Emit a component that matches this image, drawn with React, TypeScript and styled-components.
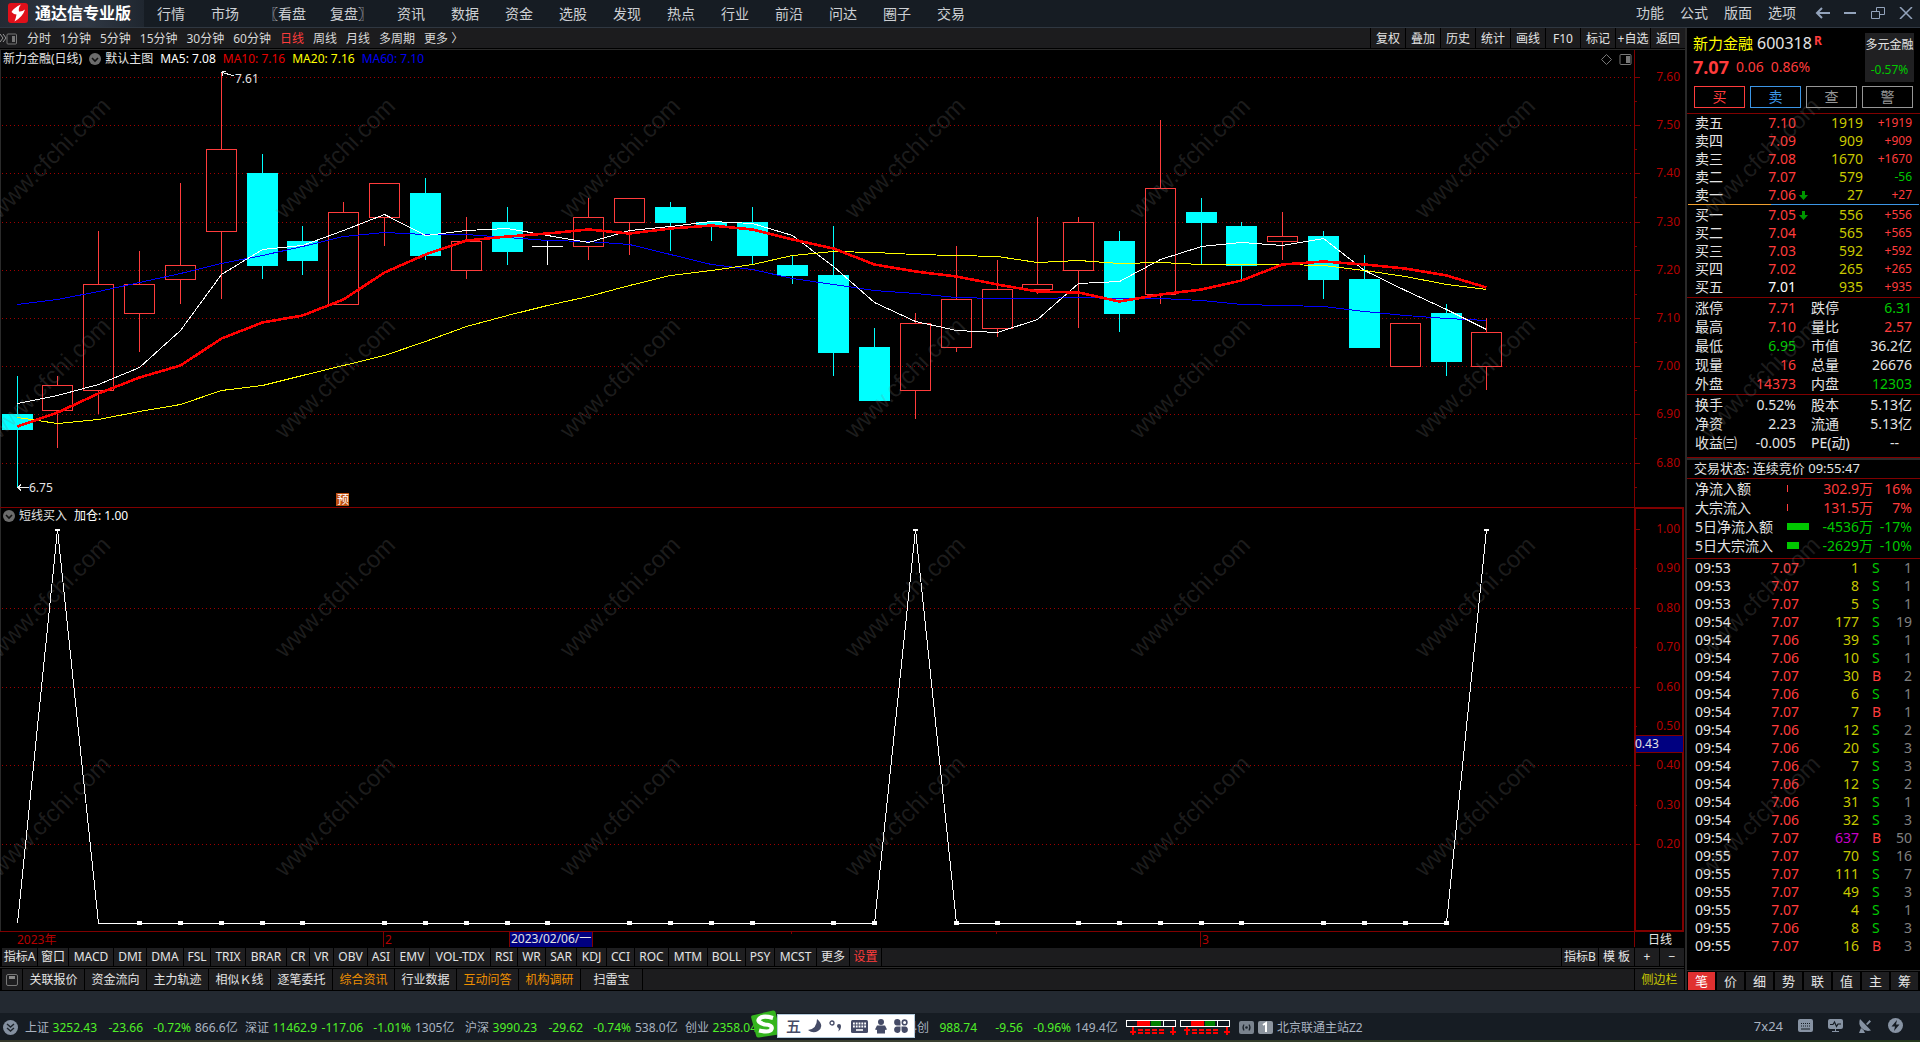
import React, { useLayoutEffect, useRef, useState } from "react";
import styled, { createGlobalStyle } from "styled-components";

const RED = "#ff3c3c";
const GREEN = "#00c800";
const YELLOW = "#c8c800";
const WHITE = "#e4e4e4";
const LINE = "#800000";
const AXIS = "#b40000";

const GlobalStyle = createGlobalStyle`
  * { box-sizing: border-box; }
  body {
    margin: 0;
    background: #000;
    color: ${WHITE};
    font: 12px/16px "Noto Sans", "Noto Sans CJK SC", sans-serif;
  }
  button {
    margin: 0;
    padding: 0;
    border: 0;
    background: none;
    color: inherit;
    font: inherit;
    white-space: nowrap;
    cursor: pointer;
  }
  svg { display: block; flex: none; }
`;

/* ---------- frame ---------- */

const Shell = styled.div`
  position: relative;
  display: flex;
  flex-direction: column;
  height: 100vh;
  min-height: 1020px;
  overflow: hidden;
`;

const TitleBar = styled.header`
  display: flex;
  align-items: stretch;
  height: 28px;
  background: #161c23;
  border-bottom: 1px solid #2f3741;
  color: #cdd0d4;
  font-size: 14px;
`;

const Brand = styled.div`
  display: flex;
  align-items: center;
  gap: 7px;
  width: 144px;
  padding-left: 8px;
  padding-bottom: 2px;
  background: linear-gradient(90deg, #242a33, #303844 60%, #1f262f);
  color: #fff;
  font-size: 16px;
  font-weight: 700;
  line-height: 24px;
  white-space: nowrap;
`;

const Nav = styled.nav`
  display: flex;
  flex: 1;
`;

const NavItem = styled.button<{ $wide?: boolean }>`
  width: ${(p) => (p.$wide ? 66 : 54)}px;
`;

const WindowMenu = styled.div`
  display: flex;
  align-items: center;
  gap: 16px;
  padding-right: 7px;
  padding-bottom: 1px;
`;

const WindowButtons = styled.div`
  display: flex;
  gap: 14px;
  padding-left: 3px;
`;

const WindowButton = styled.button`
  display: grid;
  place-items: center;
  width: 14px;
  height: 24px;
  color: #93a3bb;
`;

const Body = styled.main`
  display: flex;
  flex: 1;
  min-height: 0;
  border-bottom: 1px solid #000;
`;

const Left = styled.div`
  display: flex;
  flex-direction: column;
  flex: 1;
  min-width: 0;
  padding-right: 1px;
`;

/* ---------- period bar ---------- */

const PeriodBar = styled.div`
  display: flex;
  height: 22px;
  margin-right: -1px;
  background: #1c1c1e;
  border-bottom: 1px solid #2a2a2a;
  box-shadow: inset 0 -1px 0 #000;
`;

const Periods = styled.div`
  display: flex;
  align-items: center;
  flex: 1;
  gap: 9px;
`;

const Period = styled.button<{ $active?: boolean }>`
  color: ${(p) => (p.$active ? RED : "#d8d8d8")};
`;

const Tool = styled.button`
  width: 35px;
  border-left: 1px solid #000;
  color: ${WHITE};
`;

/* ---------- charts ---------- */

const ChartPane = styled.section<{ $grow: number }>`
  position: relative;
  flex: ${(p) => p.$grow} 1 0;
  min-height: 0;
  overflow: hidden;

  text {
    font: 12px "Noto Sans", "Noto Sans CJK SC", sans-serif;
  }
`;

const DateStrip = styled.div`
  height: 17px;
  overflow: hidden;

  text {
    font: 12px "Noto Sans", "Noto Sans CJK SC", sans-serif;
  }
`;

const Legend = styled.div`
  position: absolute;
  top: 1px;
  left: 3px;
  display: flex;
  align-items: center;
  gap: 7px;
  height: 16px;
  white-space: nowrap;
`;

const LegendItem = styled.span<{ $color?: string }>`
  color: ${(p) => p.$color ?? "#fff"};
`;

const LegendName = styled.span`
  display: flex;
  align-items: center;
  gap: 4px;
`;

const PaneTools = styled.div`
  position: absolute;
  top: 3px;
  right: 52px;
  display: flex;
  gap: 6px;
`;

/* ---------- tab rows ---------- */

const IndicatorTabs = styled.div`
  display: flex;
  gap: 1px;
  height: 21px;
  padding-left: 2px;
  border-bottom: 1px solid #000;
  box-shadow: inset 0 -1px 0 #2a2a2a;
`;

const IndicatorTab = styled.button<{ $w: number; $color?: string }>`
  flex: none;
  width: ${(p) => p.$w}px;
  height: 18px;
  background: #1e1e20;
  color: ${(p) => p.$color ?? WHITE};
`;

const TabFill = styled.div`
  flex: 1;
  max-height: 21px;
  background: #1c1c1e;
`;

const IndicatorFill = styled(TabFill)`
  height: 18px;
`;

const BottomTabs = styled.div`
  display: flex;
  gap: 1px;
  height: 21px;
  padding-left: 2px;
`;

const BottomTab = styled.button<{ $w?: number; $color?: string }>`
  display: grid;
  place-items: center;
  flex: none;
  width: ${(p) => p.$w ?? 61}px;
  background: #1e1e20;
  color: ${(p) => p.$color ?? WHITE};
`;

/* ---------- quote panel ---------- */

const Side = styled.aside`
  display: flex;
  flex-direction: column;
  flex: none;
  width: 235px;
  border-left: 2px solid #2a2a2a;
`;

const QuoteHead = styled.div`
  display: flex;
  justify-content: space-between;
  height: 58px;
  padding: 3px 6px 0 6px;
`;

const QuoteLine = styled.div`
  display: flex;
  align-items: center;
  gap: 4px;
  height: 24px;
  font-size: 16px;
`;

const StockName = styled.span`
  color: #ffff00;
  font-size: 15px;
`;

const Flag = styled.b`
  align-self: flex-start;
  margin-left: -2px;
  color: ${RED};
  font-size: 12px;
  line-height: 20px;
`;

const PriceLine = styled(QuoteLine)`
  gap: 7px;
  color: ${RED};
  font-size: 14px;
`;

const LastPrice = styled.b`
  font-size: 18px;
`;

const Sector = styled.div`
  display: flex;
  flex-direction: column;
  justify-content: space-around;
  align-items: center;
  width: 49px;
  height: 49px;
  margin-top: 2px;
  background: #202022;
  white-space: nowrap;
`;

const SectorChange = styled.span`
  color: ${GREEN};
`;

const Trade = styled.div`
  display: flex;
  gap: 5px;
  padding: 0 7px 5px 7px;
`;

const TradeButton = styled.button<{ $color: string }>`
  flex: 1;
  height: 22px;
  border: 1px solid ${(p) => p.$color};
  color: ${(p) => p.$color};
  font-size: 14px;
  line-height: 18px;
`;

const Grid = styled.table<{ $row: number }>`
  width: 100%;
  table-layout: fixed;
  border-collapse: separate;
  border-spacing: 0;
  padding: 0 8px;
  font-size: 14px;

  td, th {
    height: ${(p) => p.$row}px;
    padding: 0;
    font-weight: 400;
    line-height: ${(p) => p.$row}px;
    text-align: right;
    white-space: nowrap;
  }
`;

const Block = styled.section<{ $h: number }>`
  flex: none;
  height: ${(p) => p.$h}px;
  border-top: 1px solid ${LINE};
  overflow: hidden;
`;

const Label = styled.th`
  && { text-align: left; }
`;

const SecondLabel = styled(Label)`
  && { padding-left: 15px; }
`;

const Num = styled.td<{ $color?: string; $small?: boolean; $inset?: boolean }>`
  color: ${(p) => p.$color ?? WHITE};
  font-size: ${(p) => (p.$small ? 12 : 14)}px;
  && { padding-right: ${(p) => (p.$inset ? 13 : 0)}px; }
`;

const IconCell = styled.td`
  svg { margin-left: 3px; }
`;

const TradeSide = styled.td<{ $color: string }>`
  && { padding-left: 13px; text-align: left; }
  color: ${(p) => p.$color};
`;

const Balance = styled.div`
  display: flex;
  height: 1px;
  margin: 0 1px 1px;
  background: #3c96e6;

  &::before {
    content: "";
    width: 36%;
    background: #f0a030;
  }
`;

const TradeState = styled.div`
  height: 20px;
  padding-left: 7px;
  border-top: 2px solid #2a2a2a;
  font-size: 13px;
  line-height: 16px;
`;

const FlowBar = styled.div<{ $w: number; $color: string }>`
  width: ${(p) => p.$w}px;
  height: 7px;
  background: ${(p) => p.$color};
`;

const SideTabs = styled.div`
  display: flex;
  gap: 2px;
  height: 20px;
  margin-top: auto;
  padding: 1px 2px 0 1px;
  border-top: 1px solid #2a2a2a;
`;

const SideTab = styled.button<{ $active?: boolean }>`
  flex: 1;
  background: ${(p) => (p.$active ? "#e03030" : "#1e1e20")};
  color: ${(p) => (p.$active ? "#fff" : WHITE)};
  font-size: 13px;
  line-height: 18px;
`;

/* ---------- status bar ---------- */

const Band = styled.div`
  flex: none;
  height: 22px;
  background: #232931;
`;

const StatusBar = styled.footer`
  position: relative;
  display: flex;
  align-items: center;
  flex: none;
  height: 27px;
  padding-top: 2px;
  padding-left: 3px;
  background: #161c23;
  color: #a9b3c0;
`;

const Quotes = styled.div`
  display: flex;
  padding-left: 7px;
`;

const Quote = styled.div`
  display: grid;
  grid-template-columns: 24px 48px 46px 48px 1fr;
  width: 220px;
  text-align: right;
  white-space: nowrap;
`;

const QuoteName = styled.span`
  text-align: left;
`;

const QuoteNum = styled.span`
  color: #50f028;
`;

const Turnover = styled.span`
  padding-left: 4px;
  text-align: left;
`;

const Station = styled.div`
  display: flex;
  align-items: center;
  gap: 4px;
  padding-left: 1px;
  white-space: nowrap;
`;

const StatusIcons = styled.div`
  display: flex;
  align-items: center;
  gap: 15px;
  margin-left: auto;
  padding-right: 17px;
  padding-bottom: 4px;
`;

const Clock = styled.span`
  font-size: 13px;
`;

const Desktop = styled.div`
  flex: none;
  height: 2px;
  background: linear-gradient(90deg, #34382a, #3a4030 50%, #24381c);
`;

const ImeBar = styled.div`
  position: absolute;
  left: 751px;
  bottom: 2px;
  display: flex;
  align-items: flex-end;
`;

const ImeKeys = styled.div`
  display: flex;
  align-items: center;
  justify-content: space-between;
  width: 138px;
  height: 24px;
  margin-left: -4px;
  padding: 0 6px 0 8px;
  border: 1px solid #b4cbdc;
  background: #fff;
  color: #454b66;
  font-size: 15px;
  font-weight: 500;
`;

const Watermark = styled.svg`
  position: absolute;
  inset: 0;
  pointer-events: none;

  text {
    font: 24px "Liberation Sans", Arial, sans-serif;
    fill: #808080;
    fill-opacity: 0.22;
  }
`;

/* ---------- data ---------- */

type Candle = [open: number, close: number, high: number, low: number];

const candles: Candle[] = [
  [6.9, 6.87, 6.98, 6.75], [6.91, 6.96, 6.98, 6.83], [6.95, 7.17, 7.28, 6.9],
  [7.11, 7.17, 7.24, 7.03], [7.18, 7.21, 7.38, 7.13], [7.28, 7.45, 7.61, 7.14],
  [7.4, 7.21, 7.44, 7.18], [7.26, 7.22, 7.29, 7.19], [7.13, 7.32, 7.34, 7.13],
  [7.31, 7.38, 7.38, 7.25], [7.36, 7.23, 7.39, 7.22], [7.2, 7.26, 7.31, 7.18],
  [7.3, 7.24, 7.33, 7.21], [7.25, 7.25, 7.26, 7.21], [7.25, 7.31, 7.35, 7.22],
  [7.3, 7.35, 7.35, 7.23], [7.33, 7.3, 7.34, 7.24], [7.3, 7.29, 7.3, 7.26],
  [7.3, 7.23, 7.33, 7.21], [7.21, 7.19, 7.23, 7.17], [7.19, 7.03, 7.29, 6.98],
  [7.04, 6.93, 7.08, 6.93], [6.95, 7.09, 7.11, 6.89], [7.04, 7.14, 7.25, 7.03],
  [7.08, 7.16, 7.22, 7.06], [7.16, 7.17, 7.31, 7.15], [7.2, 7.3, 7.31, 7.08],
  [7.26, 7.11, 7.28, 7.07], [7.15, 7.37, 7.51, 7.13], [7.32, 7.3, 7.35, 7.21],
  [7.29, 7.21, 7.3, 7.18], [7.26, 7.27, 7.32, 7.22], [7.27, 7.18, 7.28, 7.14],
  [7.18, 7.04, 7.23, 7.04], [7.0, 7.09, 7.09, 7.0], [7.11, 7.01, 7.13, 6.98],
  [7.0, 7.07, 7.1, 6.95],
];

/* Averages are kept as steps below 7.636, 1445 steps to the yuan. */
const averages = [
  { color: "#0000ff", width: 1, steps: [733, 717, 693, 667, 640, 610, 585, 558, 529, 517, 522, 523, 533, 541, 545, 553, 584, 614, 629, 655, 674, 691, 700, 712, 716, 716, 713, 716, 716, 722, 733, 737, 740, 755, 766, 775, 782] },
  { color: "#ffffff", width: 1, steps: [1030, 1006, 973, 921, 809, 643, 569, 556, 510, 463, 525, 511, 505, 527, 547, 511, 498, 485, 490, 525, 620, 727, 785, 811, 817, 778, 671, 664, 599, 560, 547, 555, 536, 631, 691, 749, 808] },
  { color: "#ffff00", width: 1, steps: [1070, 1089, 1078, 1053, 1033, 991, 976, 946, 916, 884, 842, 798, 767, 737, 709, 677, 647, 631, 613, 587, 573, 577, 583, 587, 589, 607, 601, 610, 607, 613, 613, 613, 617, 632, 650, 673, 688] },
  { color: "#ff0000", width: 2, steps: [1099, 1055, 999, 951, 916, 834, 787, 767, 717, 638, 582, 542, 528, 520, 507, 519, 505, 497, 508, 537, 566, 613, 635, 649, 672, 695, 696, 723, 703, 688, 660, 612, 603, 613, 624, 646, 682] },
];

const signalBars = [1, 22, 36];
const unmarkedBars = [0, 2, 8, 14, 19, 25, 31];

const navItems = ["行情", "市场", "〖看盘", "复盘〗", "资讯", "数据", "资金", "选股", "发现", "热点", "行业", "前沿", "问达", "圈子", "交易"];
const periods = ["分时", "1分钟", "5分钟", "15分钟", "30分钟", "60分钟", "日线", "周线", "月线", "多周期", "更多 〉"];
const tools = ["复权", "叠加", "历史", "统计", "画线", "F10", "标记", "+自选", "返回"];

const indicators: [string, number][] = [
  ["指标A", 35], ["窗口", 30], ["MACD", 44], ["DMI", 32], ["DMA", 36], ["FSL", 26], ["TRIX", 34],
  ["BRAR", 40], ["CR", 22], ["VR", 23], ["OBV", 33], ["ASI", 26], ["EMV", 34], ["VOL-TDX", 60],
  ["RSI", 26], ["WR", 27], ["SAR", 30], ["KDJ", 29], ["CCI", 27], ["ROC", 33], ["MTM", 38],
  ["BOLL", 37], ["PSY", 28], ["MCST", 41], ["更多", 32], ["设置", 31],
];

const bottomTabs: [string, string?][] = [
  ["关联报价"], ["资金流向"], ["主力轨迹"], ["相似Ｋ线"], ["逐笔委托"],
  ["综合资讯", "#f09000"], ["行业数据"], ["互动问答", "#f09000"], ["机构调研", "#f09000"], ["扫雷宝"],
];

type Depth = { name: string; price: string; volume: string; change: string; arrow?: boolean };

const asks: Depth[] = [
  { name: "卖五", price: "7.10", volume: "1919", change: "+1919" },
  { name: "卖四", price: "7.09", volume: "909", change: "+909" },
  { name: "卖三", price: "7.08", volume: "1670", change: "+1670" },
  { name: "卖二", price: "7.07", volume: "579", change: "-56" },
  { name: "卖一", price: "7.06", volume: "27", change: "+27", arrow: true },
];

const bids: Depth[] = [
  { name: "买一", price: "7.05", volume: "556", change: "+556", arrow: true },
  { name: "买二", price: "7.04", volume: "565", change: "+565" },
  { name: "买三", price: "7.03", volume: "592", change: "+592" },
  { name: "买四", price: "7.02", volume: "265", change: "+265" },
  { name: "买五", price: "7.01", volume: "935", change: "+935" },
];

type Stat = [string, string, string, string, string, string];

const stats: Stat[] = [
  ["涨停", "7.71", RED, "跌停", "6.31", GREEN],
  ["最高", "7.10", RED, "量比", "2.57", RED],
  ["最低", "6.95", GREEN, "市值", "36.2亿", WHITE],
  ["现量", "16", RED, "总量", "26676", WHITE],
  ["外盘", "14373", RED, "内盘", "12303", GREEN],
];

const shareStats: Stat[] = [
  ["换手", "0.52%", WHITE, "股本", "5.13亿", WHITE],
  ["净资", "2.23", WHITE, "流通", "5.13亿", WHITE],
  ["收益㈢", "-0.005", WHITE, "PE(动)", "--", WHITE],
];

const flows: [string, number, string, string, string][] = [
  ["净流入额", 1, "302.9万", "16%", RED],
  ["大宗流入", 1, "131.5万", "7%", RED],
  ["5日净流入额", 22, "-4536万", "-17%", GREEN],
  ["5日大宗流入", 12, "-2629万", "-10%", GREEN],
];

const ticks: [string, string, number, "S" | "B", number][] = [
  ["09:53", "7.07", 1, "S", 1], ["09:53", "7.07", 8, "S", 1], ["09:53", "7.07", 5, "S", 1],
  ["09:54", "7.07", 177, "S", 19], ["09:54", "7.06", 39, "S", 1], ["09:54", "7.06", 10, "S", 1],
  ["09:54", "7.07", 30, "B", 2], ["09:54", "7.06", 6, "S", 1], ["09:54", "7.07", 7, "B", 1],
  ["09:54", "7.06", 12, "S", 2], ["09:54", "7.06", 20, "S", 3], ["09:54", "7.06", 7, "S", 3],
  ["09:54", "7.06", 12, "S", 2], ["09:54", "7.06", 31, "S", 1], ["09:54", "7.06", 32, "S", 3],
  ["09:54", "7.07", 637, "B", 50], ["09:55", "7.07", 70, "S", 16], ["09:55", "7.07", 111, "S", 7],
  ["09:55", "7.07", 49, "S", 3], ["09:55", "7.07", 4, "S", 1], ["09:55", "7.06", 8, "S", 3],
  ["09:55", "7.07", 16, "B", 3],
];

const indices: string[][] = [
  ["上证", "3252.43", "-23.66", "-0.72%", "866.6亿"],
  ["深证", "11462.9", "-117.06", "-1.01%", "1305亿"],
  ["沪深", "3990.23", "-29.62", "-0.74%", "538.0亿"],
  ["创业", "2358.04", "", "", ""],
  ["科创", "988.74", "-9.56", "-0.96%", "149.4亿"],
];

/* ---------- drawing helpers ---------- */

const AXIS_W = 50;

function useSize(): [React.RefObject<HTMLDivElement | null>, number, number] {
  const ref = useRef<HTMLDivElement>(null);
  const [size, setSize] = useState([0, 0]);
  useLayoutEffect(() => {
    const node = ref.current;
    if (!node) return;
    const read = () => setSize([node.clientWidth, node.clientHeight]);
    read();
    const observer = new ResizeObserver(read);
    observer.observe(node);
    return () => observer.disconnect();
  }, []);
  return [ref, size[0], size[1]];
}

const barX = (i: number, plot: number) => Math.round(17 + (i * plot) / 40.02 - 0.4);

function Chevron() {
  return (
    <svg width="12" height="12" viewBox="0 0 12 12">
      <circle cx="6" cy="6" r="6" fill="#6c6c6c" />
      <path d="M3 5l3 3 3-3" fill="none" stroke="#111" strokeWidth="1.6" />
    </svg>
  );
}

function PriceChart() {
  const [ref, w, h] = useSize();
  const plot = w - AXIS_W;
  const y = (p: number) => Math.round(27 + ((7.6 - p) * 482 * h) / 457);
  const majors = [7.6, 7.5, 7.4, 7.3, 7.2, 7.1, 7.0, 6.9, 6.8];
  return (
    <ChartPane ref={ref} $grow={457}>
      <svg width={w} height={h} role="img" aria-label="新力金融 日线">
        <g shapeRendering="crispEdges" fill="none">
          <path d={`M.5 0V${h}`} stroke="#2a2a2a" />
          {majors.map((p) => (
            <g key={p}>
              <path d={`M2 ${y(p) + 0.5}H${plot}`} stroke="#a00000" strokeDasharray="1 3" />
              <path d={`M${plot} ${y(p) + 0.5}h6M${plot} ${y(p - 0.05) + 0.5}h3`} stroke={LINE} />
            </g>
          ))}
          <path d={`M${plot + 0.5} 0V${h}`} stroke={LINE} />
          {candles.map(([open, close, high, low], i) => {
            const x = barX(i, plot);
            const top = y(Math.max(open, close));
            const bottom = y(Math.min(open, close));
            if (open === close)
              return <path key={i} d={`M${x - 15} ${top + 0.5}h31M${x + 0.5} ${y(high)}V${y(low)}`} stroke="#fff" />;
            if (open > close)
              return (
                <g key={i}>
                  <path d={`M${x + 0.5} ${y(high)}V${y(low)}`} stroke="#00ffff" />
                  <rect x={x - 15} y={top} width="31" height={bottom - top + 1} fill="#00ffff" />
                </g>
              );
            return (
              <g key={i} stroke={RED}>
                <path d={`M${x + 0.5} ${y(high)}V${top}M${x + 0.5} ${bottom}V${y(low)}`} />
                <rect x={x - 14.5} y={top + 0.5} width="30" height={bottom - top} />
              </g>
            );
          })}
          {averages.map((line) => (
            <polyline
              key={line.color}
              points={line.steps.map((s, i) => `${barX(i, plot) + 0.5},${y(7.636 - s / 1445) + 0.5}`).join(" ")}
              stroke={line.color}
              strokeWidth={line.width === 2 ? 2.6 : 1}
            />
          ))}
          <path d={`M${barX(5, plot)} ${y(7.61)}l13 4M${barX(5, plot) + 1} ${y(7.61) + 4}v-4l4 -1`} stroke="#eee" />
          <path d={`M${barX(0, plot) + 1} ${y(6.75) + 0.5}h11m-8-3l-3 3l3 3`} stroke="#eee" />
        </g>
        {majors.map((p) => (
          <text key={p} x={w - 4} y={y(p) + 4} textAnchor="end" fill={AXIS}>{p.toFixed(2)}</text>
        ))}
        <text x={barX(5, plot) + 14} y={y(7.61) + 11} fill={WHITE}>7.61</text>
        <text x={barX(0, plot) + 12} y={y(6.75) + 5} fill={WHITE}>6.75</text>
        <rect x={barX(8, plot) - 7} y={h - 14} width="13" height="13" fill="#c05010" />
        <text x={barX(8, plot) - 6} y={h - 3} fill="#fff">预</text>
      </svg>
      <Legend>
        <LegendItem $color={WHITE}>新力金融(日线)</LegendItem>
        <LegendName><Chevron /> 默认主图</LegendName>
        <LegendItem>MA5: 7.08</LegendItem>
        <LegendItem $color="#e60000">MA10: 7.16</LegendItem>
        <LegendItem $color="#ffff00">MA20: 7.16</LegendItem>
        <LegendItem $color="#0000f0">MA60: 7.10</LegendItem>
      </Legend>
      <PaneTools>
        <svg width="13" height="13" viewBox="0 0 13 13"><path d="M6.5 1.5l5 5-5 5-5-5z" fill="none" stroke="#777" /></svg>
        <svg width="13" height="13" viewBox="0 0 13 13">
          <rect x="1" y="1.5" width="11" height="10" rx="1" fill="none" stroke="#777" />
          <path d="M7 3h4v7H7z" fill="#777" />
        </svg>
      </PaneTools>
    </ChartPane>
  );
}

function SignalChart() {
  const [ref, w, h] = useSize();
  const plot = w - AXIS_W;
  const y = (v: number) => Math.round(h - 8 - (v * 394 * h) / 424);
  const labels = [1, 0.9, 0.8, 0.7, 0.6, 0.5, 0.4, 0.3, 0.2];
  const value = (i: number) => (signalBars.includes(i) ? 1 : 0);
  const cursorY = y(0.43) - 18;
  return (
    <ChartPane ref={ref} $grow={424}>
      <svg width={w} height={h} role="img" aria-label="短线买入">
        <g shapeRendering="crispEdges" fill="none">
          <path d={`M.5 0V${h}`} stroke="#2a2a2a" />
          {[0.8, 0.6, 0.4, 0.2].map((v) => (
            <path key={v} d={`M2 ${y(v) + 0.5}H${plot}`} stroke="#a00000" strokeDasharray="1 3" />
          ))}
          <path d={`M0 .5H${w}`} stroke={LINE} />
          <path d={`M${plot + 1} 1H${w - 1}V${h}H${plot + 1}z`} stroke={LINE} strokeWidth="2" />
          {labels.map((v, i) => (
            <path key={v} d={`M${plot} ${y(v) + 0.5}h${i % 2 ? 3 : 6}`} stroke={LINE} />
          ))}
          <polyline
            points={candles.map((_, i) => `${barX(i, plot) + 0.5},${y(value(i)) + 0.5}`).join(" ")}
            stroke="#fff"
          />
          {candles.map((_, i) =>
            unmarkedBars.includes(i) ? null : (
              <rect key={i} x={barX(i, plot) - 2} y={y(value(i)) - (value(i) ? 0 : 2)} width="5" height={value(i) ? 2 : 4} fill="#fff" />
            ),
          )}
          <rect x={plot + 2} y={cursorY} width={AXIS_W - 3} height="16" fill="#000080" />
          <path d={`M${plot} ${cursorY - 0.5}H${w}M${plot} ${cursorY + 16.5}H${w}`} stroke={LINE} />
        </g>
        {labels.map((v) =>
          <text key={v} x={w - 4} y={y(v) + 4} textAnchor="end" fill={AXIS}>{v.toFixed(2)}</text>
        )}
        <text x={plot + 1} y={cursorY + 12} fill={WHITE}>0.43</text>
      </svg>
      <Legend>
        <LegendName><Chevron /> 短线买入</LegendName>
        <LegendItem>加仓: 1.00</LegendItem>
      </Legend>
    </ChartPane>
  );
}

function DateAxis() {
  const [ref, w] = useSize();
  const plot = w - AXIS_W;
  const at = (i: number) => barX(i, plot);
  return (
    <DateStrip ref={ref}>
      <svg width={w} height="17">
        <g shapeRendering="crispEdges" fill="none" stroke={LINE}>
          <path d={`M0 .5H${w}M${plot + 0.5} 0V16`} />
          <path d={`M${at(9) - 0.5} 0V16M${at(29) - 0.5} 0V16M${at(19) - 0.5} 0v3M${at(24) - 0.5} 0v3`} />
          <path d={`M${at(12) + 2.5} 1V16M${at(14) + 4.5} 1V16`} />
        </g>
        <rect x={at(12) + 3} y="1" width={at(14) - at(12) + 1} height="15" fill="#000080" />
        <text x="17" y="13" fill={AXIS}>2023年</text>
        <text x={at(9) + 1} y="13" fill={AXIS}>2</text>
        <text x={at(29) + 1} y="13" fill={AXIS}>3</text>
        <text x={at(12) + 4} y="12" fill={WHITE}>2023/02/06/一</text>
        <text x={plot + 26} y="13" textAnchor="middle" fill={WHITE}>日线</text>
      </svg>
    </DateStrip>
  );
}

function DownArrow() {
  return (
    <svg width="9" height="9" viewBox="0 0 9 9">
      <path d="M3 0h3v4h3L4.500 9 0 4h3z" fill="#009600" />
    </svg>
  );
}

function DepthTable({ rows, label }: { rows: Depth[]; label: string }) {
  return (
    <Grid $row={18} aria-label={label}>
      <colgroup>
        <col width="40" /><col width="61" /><col width="16" /><col width="51" /><col width="49" />
      </colgroup>
      <tbody>
        {rows.map((r) => (
          <tr key={r.name}>
            <Label scope="row">{r.name}</Label>
            <Num $color={r.price === "7.01" ? "#fff" : RED}>{r.price}</Num>
            <IconCell>{r.arrow && <DownArrow />}</IconCell>
            <Num $color={YELLOW}>{r.volume}</Num>
            <Num $small $color={r.change.startsWith("-") ? GREEN : RED}>{r.change}</Num>
          </tr>
        ))}
      </tbody>
    </Grid>
  );
}

function StatTable({ rows }: { rows: Stat[] }) {
  return (
    <Grid $row={19}>
      <colgroup>
        <col width="48" /><col width="53" /><col width="66" /><col width="50" />
      </colgroup>
      <tbody>
        {rows.map(([a, av, ac, b, bv, bc]) => (
          <tr key={a}>
            <Label scope="row">{a}</Label>
            <Num $color={ac}>{av}</Num>
            <SecondLabel scope="row">{b}</SecondLabel>
            <Num $color={bc} $inset={bv === "--"}>{bv}</Num>
          </tr>
        ))}
      </tbody>
    </Grid>
  );
}

function QuotePanel() {
  return (
    <Side>
      <QuoteHead>
        <div>
          <QuoteLine>
            <StockName>新力金融</StockName>
            <span>600318</span>
            <Flag>R</Flag>
          </QuoteLine>
          <PriceLine>
            <LastPrice>7.07</LastPrice>
            <span>0.06</span>
            <span>0.86%</span>
          </PriceLine>
        </div>
        <Sector>
          <span>多元金融</span>
          <SectorChange>-0.57%</SectorChange>
        </Sector>
      </QuoteHead>
      <Trade>
        <TradeButton $color={RED}>买</TradeButton>
        <TradeButton $color="#3c96e6">卖</TradeButton>
        <TradeButton $color="#969696">查</TradeButton>
        <TradeButton $color="#969696">警</TradeButton>
      </Trade>
      <Block $h={184}>
        <DepthTable rows={asks} label="卖盘" />
        <Balance />
        <DepthTable rows={bids} label="买盘" />
      </Block>
      <Block $h={97}><StatTable rows={stats} /></Block>
      <Block $h={63}><StatTable rows={shareStats} /></Block>
      <Block $h={21}><TradeState>交易状态: 连续竞价 09:55:47</TradeState></Block>
      <Block $h={80}>
        <Grid $row={19}>
          <colgroup>
            <col width="92" /><col width="26" /><col width="60" /><col width="39" />
          </colgroup>
          <tbody>
            {flows.map(([name, width, amount, share, color]) => (
              <tr key={name}>
                <Label scope="row">{name}</Label>
                <td><FlowBar $w={width} $color={color} /></td>
                <Num $color={color}>{amount}</Num>
                <Num $color={color}>{share}</Num>
              </tr>
            ))}
          </tbody>
        </Grid>
      </Block>
      <Block $h={398}>
        <Grid $row={18} aria-label="分笔成交">
          <colgroup>
            <col width="50" /><col width="54" /><col width="60" /><col width="35" /><col width="18" />
          </colgroup>
          <tbody>
            {ticks.map(([time, price, volume, side, count], i) => (
              <tr key={i}>
                <Label scope="row">{time}</Label>
                <Num $color={RED}>{price}</Num>
                <Num $color={volume > 500 ? "#c800c8" : YELLOW}>{volume}</Num>
                <TradeSide $color={side === "B" ? RED : GREEN}>{side}</TradeSide>
                <Num $color="#808080">{count}</Num>
              </tr>
            ))}
          </tbody>
        </Grid>
      </Block>
      <SideTabs>
        {["笔", "价", "细", "势", "联", "值", "主", "筹"].map((t, i) => (
          <SideTab key={t} $active={i === 0}>{t}</SideTab>
        ))}
      </SideTabs>
    </Side>
  );
}

function Gauge({ up }: { up?: boolean }) {
  return (
    <svg width="50" height="15" viewBox="0 0 50 15" shapeRendering="crispEdges">
      <rect x=".5" y=".5" width="49" height="6" fill="#111820" stroke="#fff" />
      <path d="M11 1h13v5H11z" fill="#f00" />
      <path d="M25 1h10v5H25z" fill="#008000" />
      <path d="M37 1h1v5h-1z" fill="#fff" />
      <path d="M12 9.500h27M12 12.500h27" stroke="#f00" strokeWidth="2" strokeDasharray="5 2" />
      <path d={up ? "M6 7h2v8H6zM4 9h6v2H4z" : "M6 7h2v8H6zM4 11h6v2H4z"} fill="#f00" />
      <path d="M46 7h2v8h-2zM44 11h6v2h-6z" fill="#f00" />
    </svg>
  );
}

function InputMethod() {
  return (
    <ImeBar>
      <svg width="30" height="28" viewBox="0 0 30 28">
        <path d="M1 5.500L22 .5q2-.4 2.500 1.500L29 22q.3 2-1.500 2.500L8 27.500q-2.200.3-2.800-1.500L.3 8Q-.2 6 1 5.500z" fill="#34b41e" />
        <path d="M22 8Q12 5 8.500 8.500T14 14.500Q22 15 20.500 19T8 20.500" fill="none" stroke="#fff" strokeWidth="4.200" />
      </svg>
      <ImeKeys>
        <span>五</span>
        <svg width="14" height="14" viewBox="0 0 14 14"><path d="M9 0q8 7 1 12-5 3-10-1 9-1 9-11z" fill="#454b66" /></svg>
        <svg width="14" height="14" viewBox="0 0 14 14">
          <circle cx="3" cy="4" r="2" fill="none" stroke="#454b66" strokeWidth="1.300" />
          <path d="M8 7a2 2 0 0 1 4 0q0 4-3 5.500 1.500-2 .5-3.500Q8 8.500 8 7z" fill="#454b66" />
        </svg>
        <svg width="17" height="13" viewBox="0 0 17 13">
          <rect width="17" height="13" rx="1.500" fill="#454b66" />
          <path d="M2 3.500h13M2 6.500h13" stroke="#fff" strokeWidth="1.800" strokeDasharray="1.800 1" />
          <path d="M5 10h7" stroke="#fff" strokeWidth="1.600" />
        </svg>
        <svg width="12" height="15" viewBox="0 0 12 15">
          <circle cx="6" cy="3" r="3" fill="#454b66" />
          <path d="M2 6.500h8l2 4-2 .5v3.500H2V11l-2-.5z" fill="#454b66" />
        </svg>
        <svg width="14" height="14" viewBox="0 0 14 14" fill="#454b66">
          <path d="M6.500 6.500H3A3.200 3.200 0 1 1 6.500 3zM6.500 7.500H3A3.200 3.200 0 1 0 6.500 11zM7.500 7.500H11A3.200 3.200 0 1 1 7.500 11z" />
          <circle cx="10.600" cy="3.400" r="2.300" fill="none" stroke="#454b66" strokeWidth="1.600" />
        </svg>
      </ImeKeys>
    </ImeBar>
  );
}

function Status() {
  return (
    <StatusBar>
      <svg width="15" height="15" viewBox="0 0 15 15">
        <circle cx="7.500" cy="7.500" r="7.500" fill="#8490a0" />
        <path d="M4 4l3.500 3L11 4M4 8l3.500 3L11 8" fill="none" stroke="#1c232b" strokeWidth="1.400" />
      </svg>
      <Quotes>
        {indices.map(([name, ...values]) => (
          <Quote key={name}>
            <QuoteName>{name}</QuoteName>
            <QuoteNum>{values[0]}</QuoteNum>
            <QuoteNum>{values[1]}</QuoteNum>
            <QuoteNum>{values[2]}</QuoteNum>
            <Turnover>{values[3]}</Turnover>
          </Quote>
        ))}
      </Quotes>
      <Station>
        <Gauge />
        <Gauge up />
        <svg width="20" height="13" viewBox="-5 0 20 13">
          <rect width="15" height="13" rx="2" fill="#7a838e" />
          <circle cx="7.500" cy="6.500" r="1.300" fill="#1c232b" />
          <path d="M5 3.500q-2 3 0 6M10 3.500q2 3 0 6" fill="none" stroke="#1c232b" strokeWidth="1.200" />
        </svg>
        <svg width="15" height="13" viewBox="0 0 15 13">
          <rect width="15" height="13" rx="2" fill="#8d959f" />
          <path d="M5 4l3-2v9" fill="none" stroke="#fff" strokeWidth="2" />
        </svg>
        <span>北京联通主站Z2</span>
      </Station>
      <StatusIcons>
        <Clock>7x24</Clock>
        <svg width="15" height="13" viewBox="0 0 15 13">
          <rect width="15" height="13" rx="2" fill="#8793a3" />
          <path d="M3 4.500h9M3 7h9" stroke="#161c23" strokeDasharray="1 1" />
          <path d="M3 10h9" stroke="#161c23" />
        </svg>
        <svg width="15" height="13" viewBox="0 0 15 13">
          <rect width="15" height="10" rx="2" fill="#8793a3" />
          <path d="M2 5.500h3l1.500-2.500 2 4.500L10 5h3" fill="none" stroke="#161c23" strokeWidth="1.200" />
          <path d="M7.500 10v2.500M4 12.500h7" stroke="#8793a3" />
        </svg>
        <svg width="15" height="15" viewBox="0 0 15 15" fill="#8793a3">
          <path d="M2 1q-2 5 1.500 9t9.500 2.500z" />
          <path d="M3 10l-2 5h6l-1.500-3zM8 6l3.500-4 1.500 1.500L9.500 7z" />
        </svg>
        <svg width="15" height="15" viewBox="0 0 15 15">
          <circle cx="7.500" cy="7.500" r="7.500" fill="#8793a3" />
          <path d="M9 2L3.500 8.500H7L6 13l5.500-6.500H8z" fill="#161c23" />
        </svg>
      </StatusIcons>
      <InputMethod />
    </StatusBar>
  );
}

export default function App() {
  return (
    <Shell>
      <GlobalStyle />
      <TitleBar>
        <Brand>
          <svg width="20" height="20" viewBox="0 0 20 20">
            <rect width="20" height="20" rx="3" fill="#e0101a" />
            <path d="M13 1.500Q6 4.500 3.500 9q2.500 2.500 5 2.500Q8 15 6.500 18.500q8.500-5 10.500-12-3 2.500-6 2Q10 5 13 1.500z" fill="#fff" />
          </svg>
          通达信专业版
        </Brand>
        <Nav>
          {navItems.map((t) => (
            <NavItem key={t} $wide={t.length === 3}>{t}</NavItem>
          ))}
        </Nav>
        <WindowMenu>
          {["功能", "公式", "版面", "选项"].map((t) => <button key={t}>{t}</button>)}
          <WindowButtons>
            <WindowButton aria-label="返回">
              <svg width="16" height="12" viewBox="0 0 16 12"><path d="M7 1L2 6l5 5M2 6h13" fill="none" stroke="currentColor" strokeWidth="2" /></svg>
            </WindowButton>
            <WindowButton aria-label="最小化">
              <svg width="12" height="12" viewBox="0 0 12 12"><path d="M0 6h12" stroke="currentColor" strokeWidth="2" /></svg>
            </WindowButton>
            <WindowButton aria-label="还原">
              <svg width="14" height="12" viewBox="0 0 14 12"><path d="M.5 4.500h8v7h-8zM5.500 4.500v-4h8v7h-5" fill="none" stroke="currentColor" /></svg>
            </WindowButton>
            <WindowButton aria-label="关闭">
              <svg width="14" height="12" viewBox="0 0 14 12"><path d="M1 0l12 12M13 0L1 12" stroke="currentColor" strokeWidth="1.500" /></svg>
            </WindowButton>
          </WindowButtons>
        </WindowMenu>
      </TitleBar>

      <Body>
        <Left>
          <PeriodBar>
            <Periods>
              <svg width="18" height="14" viewBox="0 0 18 14">
                <path d="M0 2l3 4-3 4M3 2l3 4-3 4" fill="none" stroke="#999" />
                <rect x="7" y="2" width="9.500" height="10" rx="1" fill="none" stroke="#777" />
                <path d="M12 4h3v6h-3z" fill="#777" />
              </svg>
              {periods.map((t) => <Period key={t} $active={t === "日线"}>{t}</Period>)}
            </Periods>
            {tools.map((t) => <Tool key={t}>{t}</Tool>)}
          </PeriodBar>
          <PriceChart />
          <SignalChart />
          <DateAxis />
          <IndicatorTabs>
            {indicators.map(([t, width]) => (
              <IndicatorTab key={t} $w={width} $color={t === "设置" ? RED : undefined}>{t}</IndicatorTab>
            ))}
            <IndicatorFill />
            <IndicatorTab $w={36}>指标B</IndicatorTab>
            <IndicatorTab $w={35}>模 板</IndicatorTab>
            <IndicatorTab $w={24}>+</IndicatorTab>
            <IndicatorTab $w={24}>−</IndicatorTab>
          </IndicatorTabs>
          <BottomTabs>
            <BottomTab $w={20} aria-label="窗口">
              <svg width="12" height="12" viewBox="0 0 12 12">
                <rect x=".5" y=".5" width="11" height="11" rx="1.500" fill="none" stroke="#777" />
                <path d="M3 2h6v3H3z" fill="#888" />
              </svg>
            </BottomTab>
            {bottomTabs.map(([t, color]) => <BottomTab key={t} $color={color}>{t}</BottomTab>)}
            <TabFill />
            <BottomTab $w={49} $color={YELLOW}>侧边栏</BottomTab>
          </BottomTabs>
        </Left>
        <QuotePanel />
      </Body>

      <Band />
      <Status />
      <Desktop />

      <Watermark width="100%" height="100%" aria-hidden="true">
        {[158, 378, 597, 816].map((cy) =>
          [50, 335, 620, 905, 1190, 1475, 1760].map((cx) => (
            <text key={`${cx}-${cy}`} x={cx} y={cy} dy="8" textAnchor="middle" transform={`rotate(-45 ${cx} ${cy})`}>
              www.cfchi.com
            </text>
          )),
        )}
      </Watermark>
    </Shell>
  );
}
